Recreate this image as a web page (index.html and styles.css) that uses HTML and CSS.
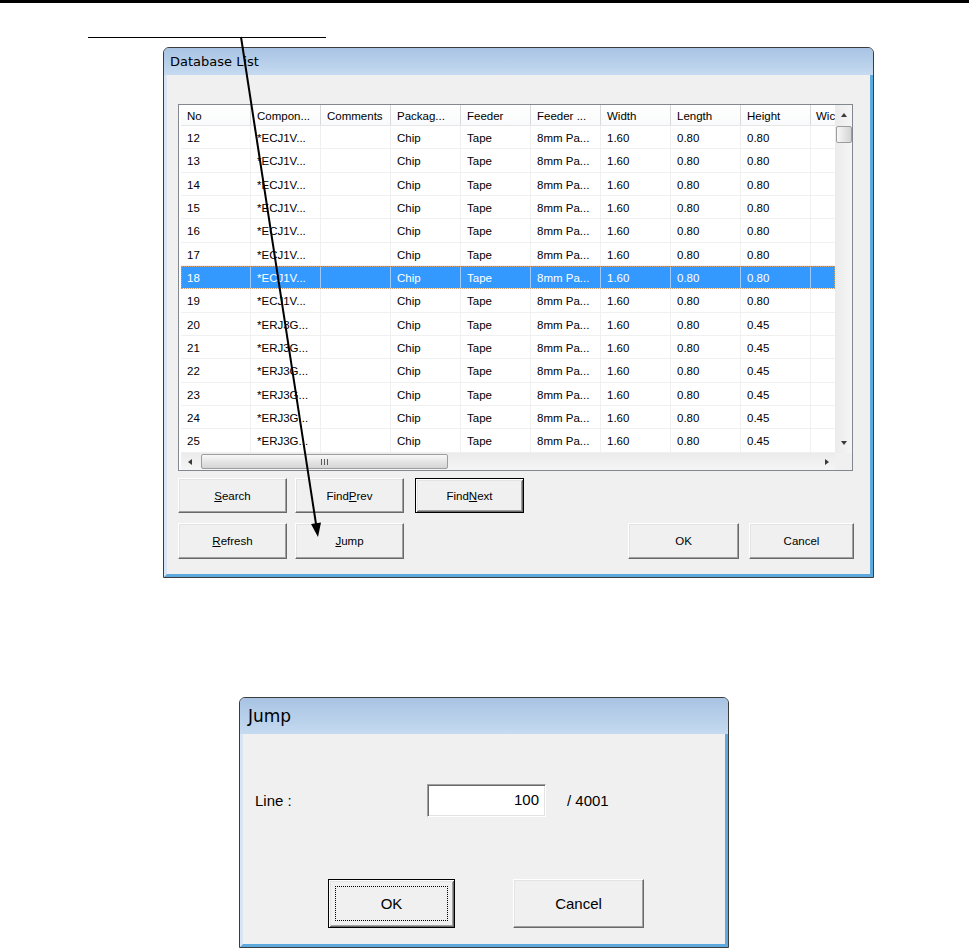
FILE: index.html
```html
<!DOCTYPE html>
<html lang="en">
<head>
    <meta charset="UTF-8">
    <meta name="viewport" content="width=device-width, initial-scale=1.0">
    <title>Database List / Jump</title>
    <link rel="stylesheet" href="styles.css">
</head>
<body>
    <div class="topbar"></div>

    <!-- Database List dialog -->
    <div class="window db_window">
        <div class="window_title">Database List</div>
        <div class="window_client db_client">
            <div class="listview">
                <div class="lv_data">
                    <div class="lv_header">
                        <span class="lv_cell">No</span>
                        <span class="lv_cell">Compon...</span>
                        <span class="lv_cell">Comments</span>
                        <span class="lv_cell">Packag...</span>
                        <span class="lv_cell">Feeder</span>
                        <span class="lv_cell">Feeder ...</span>
                        <span class="lv_cell">Width</span>
                        <span class="lv_cell">Length</span>
                        <span class="lv_cell">Height</span>
                        <span class="lv_cell lv_cell_last">Wic</span>
                    </div>
                    <div class="lv_rows">
                        <div class="lv_row"><span class="lv_cell">12</span><span class="lv_cell">*ECJ1V...</span><span class="lv_cell"></span><span class="lv_cell">Chip</span><span class="lv_cell">Tape</span><span class="lv_cell">8mm Pa...</span><span class="lv_cell">1.60</span><span class="lv_cell">0.80</span><span class="lv_cell">0.80</span><span class="lv_cell lv_cell_last"></span></div>
                        <div class="lv_row"><span class="lv_cell">13</span><span class="lv_cell">*ECJ1V...</span><span class="lv_cell"></span><span class="lv_cell">Chip</span><span class="lv_cell">Tape</span><span class="lv_cell">8mm Pa...</span><span class="lv_cell">1.60</span><span class="lv_cell">0.80</span><span class="lv_cell">0.80</span><span class="lv_cell lv_cell_last"></span></div>
                        <div class="lv_row"><span class="lv_cell">14</span><span class="lv_cell">*ECJ1V...</span><span class="lv_cell"></span><span class="lv_cell">Chip</span><span class="lv_cell">Tape</span><span class="lv_cell">8mm Pa...</span><span class="lv_cell">1.60</span><span class="lv_cell">0.80</span><span class="lv_cell">0.80</span><span class="lv_cell lv_cell_last"></span></div>
                        <div class="lv_row"><span class="lv_cell">15</span><span class="lv_cell">*ECJ1V...</span><span class="lv_cell"></span><span class="lv_cell">Chip</span><span class="lv_cell">Tape</span><span class="lv_cell">8mm Pa...</span><span class="lv_cell">1.60</span><span class="lv_cell">0.80</span><span class="lv_cell">0.80</span><span class="lv_cell lv_cell_last"></span></div>
                        <div class="lv_row"><span class="lv_cell">16</span><span class="lv_cell">*ECJ1V...</span><span class="lv_cell"></span><span class="lv_cell">Chip</span><span class="lv_cell">Tape</span><span class="lv_cell">8mm Pa...</span><span class="lv_cell">1.60</span><span class="lv_cell">0.80</span><span class="lv_cell">0.80</span><span class="lv_cell lv_cell_last"></span></div>
                        <div class="lv_row"><span class="lv_cell">17</span><span class="lv_cell">*ECJ1V...</span><span class="lv_cell"></span><span class="lv_cell">Chip</span><span class="lv_cell">Tape</span><span class="lv_cell">8mm Pa...</span><span class="lv_cell">1.60</span><span class="lv_cell">0.80</span><span class="lv_cell">0.80</span><span class="lv_cell lv_cell_last"></span></div>
                        <div class="lv_row lv_row_selected"><span class="lv_cell">18</span><span class="lv_cell">*ECJ1V...</span><span class="lv_cell"></span><span class="lv_cell">Chip</span><span class="lv_cell">Tape</span><span class="lv_cell">8mm Pa...</span><span class="lv_cell">1.60</span><span class="lv_cell">0.80</span><span class="lv_cell">0.80</span><span class="lv_cell lv_cell_last"></span></div>
                        <div class="lv_row"><span class="lv_cell">19</span><span class="lv_cell">*ECJ1V...</span><span class="lv_cell"></span><span class="lv_cell">Chip</span><span class="lv_cell">Tape</span><span class="lv_cell">8mm Pa...</span><span class="lv_cell">1.60</span><span class="lv_cell">0.80</span><span class="lv_cell">0.80</span><span class="lv_cell lv_cell_last"></span></div>
                        <div class="lv_row"><span class="lv_cell">20</span><span class="lv_cell">*ERJ3G...</span><span class="lv_cell"></span><span class="lv_cell">Chip</span><span class="lv_cell">Tape</span><span class="lv_cell">8mm Pa...</span><span class="lv_cell">1.60</span><span class="lv_cell">0.80</span><span class="lv_cell">0.45</span><span class="lv_cell lv_cell_last"></span></div>
                        <div class="lv_row"><span class="lv_cell">21</span><span class="lv_cell">*ERJ3G...</span><span class="lv_cell"></span><span class="lv_cell">Chip</span><span class="lv_cell">Tape</span><span class="lv_cell">8mm Pa...</span><span class="lv_cell">1.60</span><span class="lv_cell">0.80</span><span class="lv_cell">0.45</span><span class="lv_cell lv_cell_last"></span></div>
                        <div class="lv_row"><span class="lv_cell">22</span><span class="lv_cell">*ERJ3G...</span><span class="lv_cell"></span><span class="lv_cell">Chip</span><span class="lv_cell">Tape</span><span class="lv_cell">8mm Pa...</span><span class="lv_cell">1.60</span><span class="lv_cell">0.80</span><span class="lv_cell">0.45</span><span class="lv_cell lv_cell_last"></span></div>
                        <div class="lv_row"><span class="lv_cell">23</span><span class="lv_cell">*ERJ3G...</span><span class="lv_cell"></span><span class="lv_cell">Chip</span><span class="lv_cell">Tape</span><span class="lv_cell">8mm Pa...</span><span class="lv_cell">1.60</span><span class="lv_cell">0.80</span><span class="lv_cell">0.45</span><span class="lv_cell lv_cell_last"></span></div>
                        <div class="lv_row"><span class="lv_cell">24</span><span class="lv_cell">*ERJ3G...</span><span class="lv_cell"></span><span class="lv_cell">Chip</span><span class="lv_cell">Tape</span><span class="lv_cell">8mm Pa...</span><span class="lv_cell">1.60</span><span class="lv_cell">0.80</span><span class="lv_cell">0.45</span><span class="lv_cell lv_cell_last"></span></div>
                        <div class="lv_row"><span class="lv_cell">25</span><span class="lv_cell">*ERJ3G...</span><span class="lv_cell"></span><span class="lv_cell">Chip</span><span class="lv_cell">Tape</span><span class="lv_cell">8mm Pa...</span><span class="lv_cell">1.60</span><span class="lv_cell">0.80</span><span class="lv_cell">0.45</span><span class="lv_cell lv_cell_last"></span></div>
                    </div>
                </div>
                <!-- 滚动条 -->
                <div class="vscroll">
                    <div class="sb_btn sb_btn_v"><span class="tri tri_up"></span></div>
                    <div class="sb_thumb vthumb"></div>
                    <div class="sb_track"></div>
                    <div class="sb_btn sb_btn_v"><span class="tri tri_down"></span></div>
                </div>
                <div class="hscroll">
                    <div class="sb_btn sb_btn_h"><span class="tri tri_left"></span></div>
                    <div class="sb_thumb hthumb"><span class="grip"></span></div>
                    <div class="sb_track"></div>
                    <div class="sb_btn sb_btn_h"><span class="tri tri_right"></span></div>
                </div>
                <div class="sb_corner"></div>
            </div>

            <div class="btn_row btn_row_first">
                <button class="btn btn_wide"><u>S</u>earch</button>
                <button class="btn btn_wide btn_gap">Find<u>P</u>rev</button>
                <button class="btn btn_wide btn_default btn_gap_lg">Find<u>N</u>ext</button>
            </div>
            <div class="btn_row btn_row_second">
                <button class="btn btn_wide"><u>R</u>efresh</button>
                <button class="btn btn_wide btn_gap"><u>J</u>ump</button>
                <button class="btn btn_ok">OK</button>
                <button class="btn btn_cancel">Cancel</button>
            </div>
        </div>
    </div>

    <!-- Jump dialog -->
    <div class="window jump_window">
        <div class="window_title jump_title">Jump</div>
        <div class="window_client jump_client">
            <div class="jump_line">
                <span class="jump_label">Line :</span>
                <input class="jump_input" type="text" value="100">
                <span class="jump_total">/ 4001</span>
            </div>
            <div class="jump_buttons">
                <button class="btn btn_default jump_btn jump_ok"><span class="focus_rect">OK</span></button>
                <button class="btn jump_btn jump_cancel">Cancel</button>
            </div>
        </div>
    </div>

    <!-- 标注箭头 -->
    <svg class="annot" width="969" height="600" viewBox="0 0 969 600">
        <line x1="88" y1="37.5" x2="326" y2="37.5" stroke="#000" stroke-width="1.2"/>
        <line x1="241" y1="37" x2="316" y2="524" stroke="#000" stroke-width="2"/>
        <polygon points="318,537 311,524 321,522.5" fill="#000"/>
    </svg>
</body>
</html>
```

FILE: styles.css
```css
html,body{
    margin:0;
    padding:0;
    background:#fff;
}
body{
    position:relative;
    width:969px;
    height:950px;
    overflow:hidden;
    font-family:"Liberation Sans", Arial, sans-serif;
    font-size:11.5px;
    color:#000;
}
.topbar{
    height:3px;
    background:#000;
}
.annot{
    position:absolute;
    left:0;
    top:0;
    pointer-events:none;
}
/*
    窗口外框
*/
.window{
    box-sizing:border-box;
    display:flex;
    flex-direction:column;
    border:1px solid #3c3c3c;
    border-radius:6px 6px 0 0;
    background:#c4d8ee;
    overflow:hidden;
}
.window_title{
    display:flex;
    align-items:center;
    flex:none;
    height:27px;
    padding-left:6px;
    font-family:"DejaVu Sans", sans-serif;
    font-size:13px;
    color:#000;
    background:linear-gradient(#a8c3e3, #bcd3ec 70%, #c6dbf1);
}
.window_client{
    flex:1;
    box-sizing:border-box;
    background:#f0f0f0;
    border-left:3px solid #d9e5f4;
    border-right:3px solid #5ea9de;
    border-bottom:3px solid #5ea9de;
}
.db_window{
    width:711px;
    height:531px;
    margin:44px 0 0 163px;
}
.db_client{
    padding:29px 0 0 11px;
}
/*
    列表
*/
.listview{
    box-sizing:border-box;
    display:grid;
    grid-template-columns:654px 17px;
    grid-template-rows:348px 17px;
    width:675px;
    height:367px;
    padding-left:2px;
    border:1px solid #828790;
    background:#fff;
}
.lv_data{
    overflow:hidden;
}
.lv_header{
    display:flex;
    box-sizing:border-box;
    height:21px;
    border-bottom:1px solid #e5e5e5;
    background:linear-gradient(#fff, #f9fafb);
}
.lv_cell{
    flex:none;
    box-sizing:border-box;
    width:70px;
    padding-left:6px;
    overflow:hidden;
    white-space:nowrap;
}
.lv_header .lv_cell{
    padding-top:2px;
    line-height:18px;
    border-right:1px solid #d9d9d9;
}
.lv_header .lv_cell.lv_cell_last,
.lv_row .lv_cell.lv_cell_last{
    width:24px;
    padding-left:5px;
    border-right:none;
}
.lv_rows{
    height:327px;
    overflow:hidden;
}
.lv_row{
    display:flex;
    box-sizing:border-box;
    height:23.35px;
    border-bottom:1px solid #f0f0f0;
}
.lv_row .lv_cell{
    padding-top:2px;
    line-height:21px;
    border-right:1px solid #f0f0f0;
}
.lv_row.lv_row_selected{
    color:#fff;
    background:#3399ff;
    outline:1px dotted #d2a070;
    outline-offset:-1px;
}
.lv_row.lv_row_selected .lv_cell{
    border-right-color:#9ccbff;
}
/*
    滚动条
*/
.vscroll{
    display:flex;
    flex-direction:column;
    background:linear-gradient(to right, #ebebeb, #f5f5f5);
}
.hscroll{
    display:flex;
    background:linear-gradient(#ebebeb, #f5f5f5);
}
.sb_corner{
    background:#f0f0f0;
}
.sb_track{
    flex:1;
}
.sb_btn{
    display:flex;
    align-items:center;
    justify-content:center;
    flex:none;
}
.sb_btn_v{
    height:20px;
}
.sb_btn_h{
    width:17px;
}
.sb_thumb{
    flex:none;
    box-sizing:border-box;
    border:1px solid #9d9d9d;
    border-radius:2px;
}
.vthumb{
    height:17px;
    margin:1px 0 0 1px;
    background:linear-gradient(to right, #f8f8f8, #e2e2e2 60%, #d4d4d4);
}
.hthumb{
    display:flex;
    align-items:center;
    justify-content:center;
    width:247px;
    height:15px;
    margin:1px 0 0 3px;
    background:linear-gradient(#f8f8f8, #e2e2e2 60%, #d4d4d4);
}
.grip{
    width:7px;
    height:6px;
    background:repeating-linear-gradient(to right, #5a5a5a 0 1px, transparent 1px 3px);
}
.tri{
    width:0;
    height:0;
}
.tri_up{
    border-left:3.5px solid transparent;
    border-right:3.5px solid transparent;
    border-bottom:4px solid #3a3a3a;
}
.tri_down{
    border-left:3.5px solid transparent;
    border-right:3.5px solid transparent;
    border-top:4px solid #3a3a3a;
}
.tri_left{
    border-top:3.5px solid transparent;
    border-bottom:3.5px solid transparent;
    border-right:4px solid #3a3a3a;
}
.tri_right{
    border-top:3.5px solid transparent;
    border-bottom:3.5px solid transparent;
    border-left:4px solid #3a3a3a;
}
/*
    按钮
*/
.btn{
    box-sizing:border-box;
    display:flex;
    align-items:center;
    justify-content:center;
    flex:none;
    margin:0;
    padding:0;
    font-family:"Liberation Sans", Arial, sans-serif;
    font-size:11.5px;
    color:#000;
    background:#f0f0f0;
    border:1px solid;
    border-color:#fff #696969 #696969 #fff;
    box-shadow:inset -1px -1px #a0a0a0, inset 1px 1px #e3e3e3;
}
.btn u{
    text-decoration:underline;
}
.btn.btn_default{
    border:1px solid #000;
    box-shadow:inset 1px 1px #fff, inset -1px -1px #696969, inset 2px 2px #e3e3e3, inset -2px -2px #a0a0a0;
}
.btn_row{
    display:flex;
    width:676px;
}
.btn_row_first{
    margin-top:7px;
}
.btn_row_first .btn{
    height:35px;
}
.btn_row_second{
    margin-top:10px;
}
.btn_row_second .btn{
    height:36px;
}
.btn_wide{
    width:109px;
}
.btn_gap{
    margin-left:8px;
}
.btn_gap_lg{
    margin-left:11px;
}
.btn_ok{
    width:111px;
    margin-left:auto;
}
.btn_cancel{
    width:105px;
    margin-left:10px;
}
/*
    Jump 对话框
*/
.jump_window{
    width:490px;
    height:251px;
    margin:119px 0 0 239px;
}
.jump_title{
    height:36px;
    padding-left:8px;
    font-size:17px;
}
.jump_client{
    padding:50px 0 0 12px;
    font-size:15px;
}
.jump_line{
    display:flex;
    align-items:center;
    height:33px;
}
.jump_label{
    width:172px;
    flex:none;
}
.jump_input{
    box-sizing:border-box;
    width:119px;
    height:33px;
    margin:0;
    padding:0 6px 2px 0;
    font-family:"Liberation Sans", Arial, sans-serif;
    font-size:15px;
    text-align:right;
    color:#000;
    background:#fff;
    border:1px solid;
    border-color:#a0a0a0 #fff #fff #a0a0a0;
    box-shadow:inset 1px 1px #696969, inset -1px -1px #e3e3e3;
    outline:none;
}
.jump_total{
    margin-left:21px;
}
.jump_buttons{
    display:flex;
    margin-top:62px;
    padding-left:73px;
}
.jump_btn{
    height:49px;
    font-size:15px;
}
.jump_ok{
    width:127px;
    padding:6px;
}
.jump_cancel{
    width:131px;
    margin-left:58px;
}
.focus_rect{
    display:flex;
    align-items:center;
    justify-content:center;
    box-sizing:border-box;
    width:100%;
    height:100%;
    border:1px dotted #000;
}
```
